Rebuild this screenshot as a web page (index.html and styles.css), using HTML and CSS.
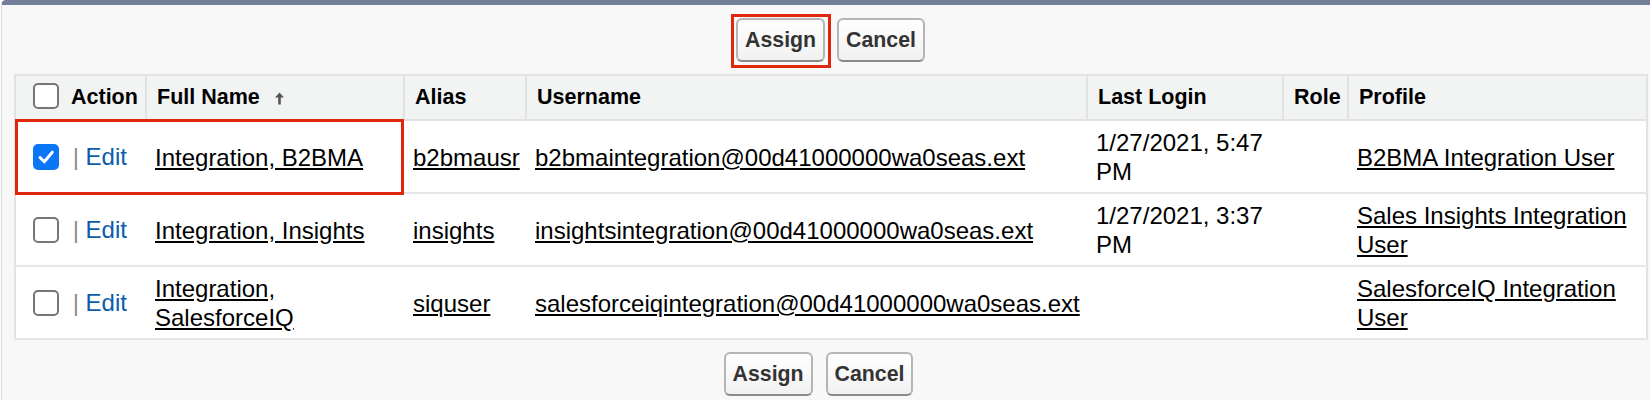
FILE: index.html
```html
<!DOCTYPE html>
<html>
<head>
<meta charset="utf-8">
<link rel="stylesheet" href="styles.css">
</head>
<body>
<div class="block">
  <div class="btn-row btn-row-top">
    <span class="marked"><button class="btn">Assign</button></span>
    <button class="btn">Cancel</button>
  </div>
  <div class="table-wrap">
    <table class="list">
      <colgroup>
        <col class="c-action"><col class="c-name"><col class="c-alias"><col class="c-user"><col class="c-login"><col class="c-role"><col class="c-profile">
      </colgroup>
      <thead>
        <tr>
          <th class="first"><span class="cb"></span>Action</th>
          <th>Full Name <svg class="sort" width="11" height="13" viewBox="0 0 11 13"><path d="M5.5 0.5 L1 5.6 H4.2 V12.5 H6.8 V5.6 H10 Z" fill="#555"/></svg></th>
          <th>Alias</th>
          <th>Username</th>
          <th>Last Login</th>
          <th>Role</th>
          <th>Profile</th>
        </tr>
      </thead>
      <tbody>
        <tr>
          <td class="first"><span class="cb checked"><svg width="26" height="26" viewBox="0 0 26 26"><path d="M7 13.5 L11.3 17.8 L19.3 8.2" fill="none" stroke="#fff" stroke-width="3" stroke-linecap="round" stroke-linejoin="round"/></svg></span> <span class="pipe">|</span> <a class="edit">Edit</a></td>
          <td><a class="u">Integration, B2BMA</a></td>
          <td><a class="u">b2bmausr</a></td>
          <td><a class="u">b2bmaintegration@00d41000000wa0seas.ext</a></td>
          <td>1/27/2021, 5:47 PM</td>
          <td></td>
          <td><a class="u">B2BMA Integration User</a></td>
        </tr>
        <tr>
          <td class="first"><span class="cb"></span> <span class="pipe">|</span> <a class="edit">Edit</a></td>
          <td><a class="u">Integration, Insights</a></td>
          <td><a class="u">insights</a></td>
          <td><a class="u">insightsintegration@00d41000000wa0seas.ext</a></td>
          <td>1/27/2021, 3:37 PM</td>
          <td></td>
          <td><a class="u">Sales Insights Integration User</a></td>
        </tr>
        <tr>
          <td class="first"><span class="cb"></span> <span class="pipe">|</span> <a class="edit">Edit</a></td>
          <td><a class="u">Integration, SalesforceIQ</a></td>
          <td><a class="u">siquser</a></td>
          <td><a class="u">salesforceiqintegration@00d41000000wa0seas.ext</a></td>
          <td></td>
          <td></td>
          <td><a class="u">SalesforceIQ Integration User</a></td>
        </tr>
      </tbody>
    </table>
    <div class="row-mark"></div>
  </div>
  <div class="btn-row btn-row-bottom">
    <button class="btn">Assign</button>
    <button class="btn">Cancel</button>
  </div>
</div>
</body>
</html>
```
FILE: styles.css
```css
html, body {
  margin: 0;
  padding: 0;
  background: #ffffff;
}
body {
  font-family: "Liberation Sans", Arial, sans-serif;
  color: #000;
}
.block {
  margin-left: 1px;
  min-height: 395px;
  background: #f8f8f8;
  border-top: 5px solid #747f99;
  border-left: 1px solid #dcdcdc;
  border-top-left-radius: 5px;
}
.btn-row {
  display: flex;
  justify-content: center;
  gap: 12px;
}
.btn-row-top {
  padding-top: 13px;
  padding-left: 9px;
}
.btn-row-bottom {
  padding-top: 12px;
  padding-right: 15px;
  gap: 13px;
}
.btn {
  font-family: "Liberation Sans", Arial, sans-serif;
  font-weight: bold;
  font-size: 21.3px;
  color: #333;
  height: 44px;
  padding: 0 7px;
  border: 2px solid #b5b5b5;
  border-bottom-color: #8a8a8a;
  border-radius: 6px;
  background: linear-gradient(#ffffff, #f1f1f1);
  line-height: 40px;
  margin: 0;
}
.marked {
  position: relative;
  display: inline-block;
  line-height: 0;
}
.marked::after {
  content: "";
  position: absolute;
  left: -5px;
  right: -6px;
  top: -4px;
  bottom: -6px;
  border: 3px solid #e0260c;
  pointer-events: none;
}
.table-wrap {
  position: relative;
  margin: 12px 2px 0 12px;
}
.list {
  width: 100%;
  table-layout: fixed;
  border-collapse: collapse;
  border: 2px solid #e2e2e2;
  background: #fff;
}
.c-action { width: 131px; }
.c-name { width: 258px; }
.c-alias { width: 122px; }
.c-user { width: 561px; }
.c-login { width: 196px; }
.c-role { width: 65px; }
.c-profile { width: auto; }
.list th {
  background: #f2f3f3;
  font-size: 21.5px;
  font-weight: bold;
  text-align: left;
  line-height: 29px;
  padding: 7px 4px 7px 10px;
  border: 2px solid #e2e2e2;
  white-space: nowrap;
}
.list td {
  font-size: 24px;
  line-height: 29px;
  padding: 7px 4px 6px 9px;
  vertical-align: middle;
  border-bottom: 2px solid #e6e6e6;
}
.list th.first, .list td.first {
  padding-left: 17px;
  white-space: nowrap;
}
.list th.first .cb {
  margin-right: 12px;
}
.cb {
  display: inline-block;
  box-sizing: border-box;
  width: 26px;
  height: 26px;
  border: 2px solid #767676;
  border-radius: 5px;
  background: #fff;
  vertical-align: middle;
  margin-right: 7px;
  position: relative;
  top: -2px;
}
.cb.checked {
  border: none;
  background: #0b77f7;
}
.cb.checked svg {
  display: block;
}
.pipe {
  color: #8c8c8c;
}
.edit {
  color: #0b5cab;
  text-decoration: none;
}
.u {
  color: #000;
  text-decoration: underline;
}
.sort {
  margin-left: 8px;
  vertical-align: -1px;
}
.row-mark {
  position: absolute;
  left: 1px;
  top: 45px;
  width: 389px;
  height: 76px;
  box-sizing: border-box;
  border: 3px solid #e0260c;
  pointer-events: none;
}
```
